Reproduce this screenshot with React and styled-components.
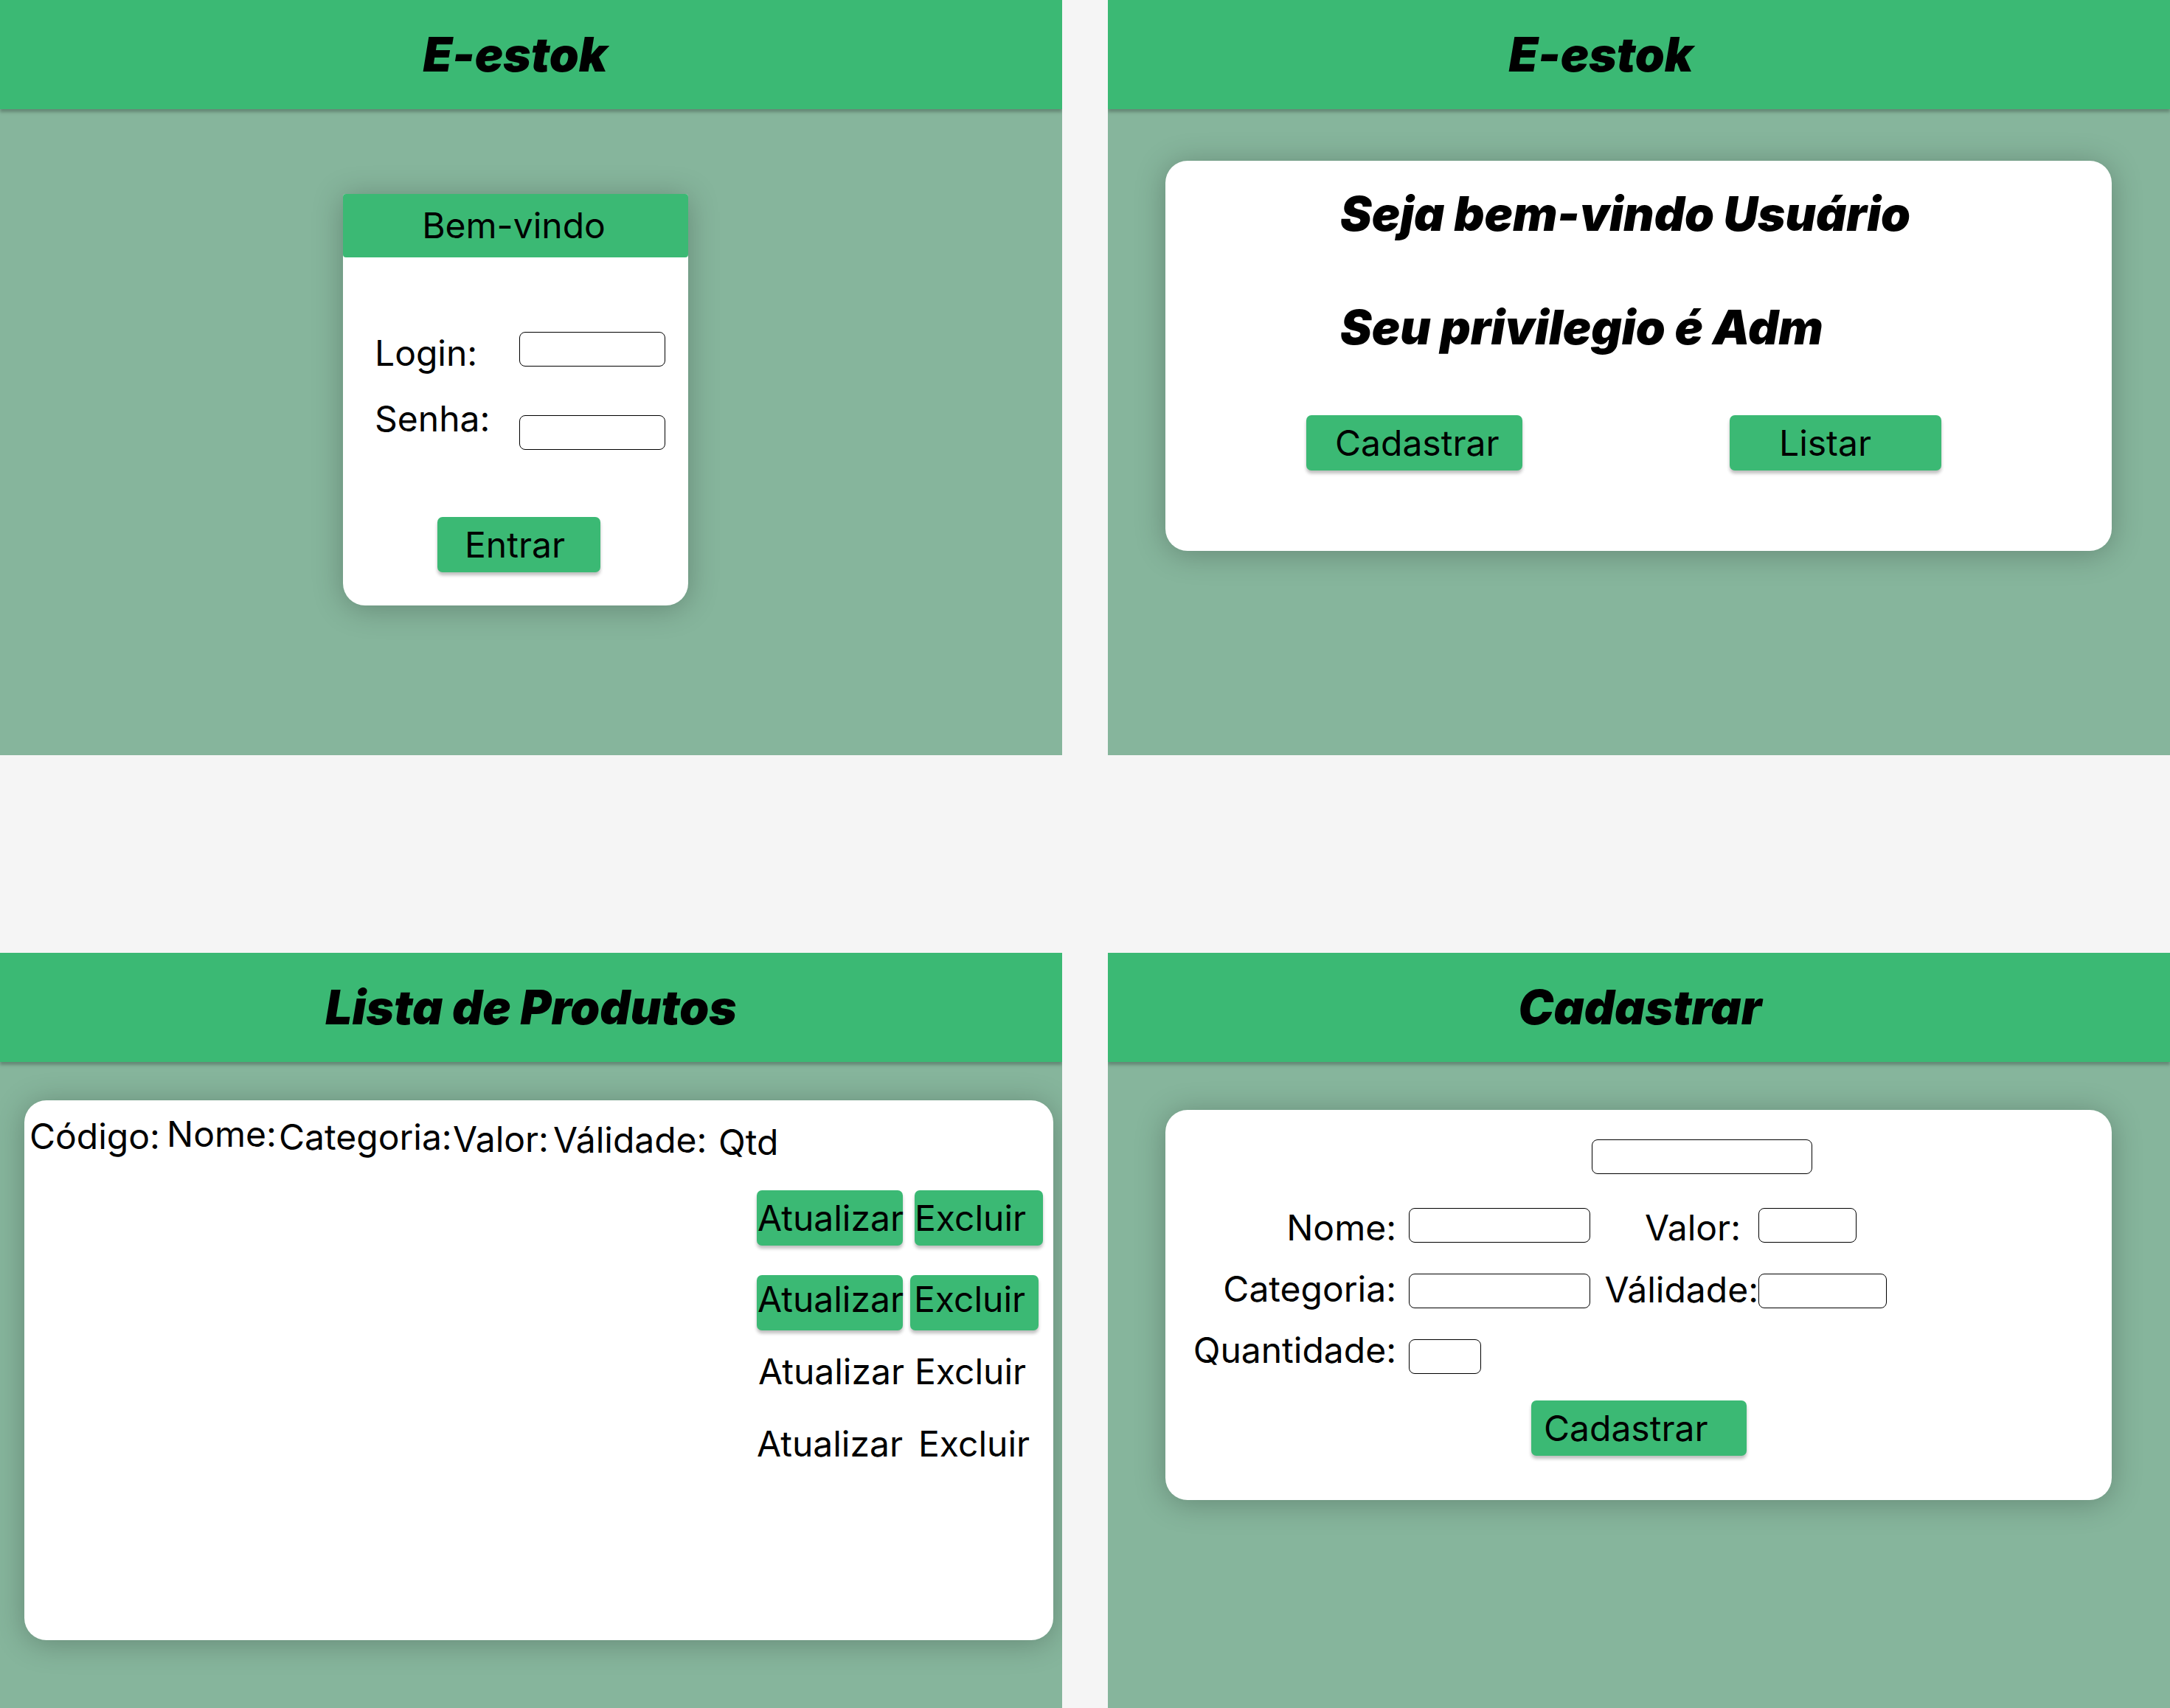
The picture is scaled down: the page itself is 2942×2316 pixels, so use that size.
import React from "react";
import styled, { createGlobalStyle } from "styled-components";

const GREEN = "#3BB974";
const PANEL = "#86B59C";
const PAGE = "#F5F5F5";

const Global = createGlobalStyle`
  html, body { margin: 0; padding: 0; background: ${PAGE}; }
  body { font-family: Inter, "Noto Sans", sans-serif; color: #000; }
  *, *::before, *::after { box-sizing: border-box; }
`;

const Board = styled.main`
  display: grid;
  grid-template-columns: 1440px 1440px;
  grid-template-rows: 1024px 1024px;
  column-gap: 62px;
  row-gap: 268px;
  width: 2942px;
  height: 2316px;
  background: ${PAGE};
`;

const Screen = styled.section`
  background: ${PANEL};
  display: flex;
  flex-direction: column;
  overflow: hidden;
`;

const TopBar = styled.header`
  position: relative;
  z-index: 1;
  flex: none;
  height: 148px;
  background: ${GREEN};
  box-shadow: 0 4px 4px rgba(0, 0, 0, 0.25);
  display: flex;
  align-items: center;
  justify-content: center;
  padding-right: ${(p) => p.$shift || 0}px;
  padding-left: ${(p) => p.$shiftL || 0}px;
`;

const Title = styled.h1`
  margin: 0;
  font-family: Inter, "Noto Sans", sans-serif;
  font-size: 64px;
  font-weight: 900;
  font-style: italic;
  line-height: 1;
  white-space: nowrap;
`;

const Input = styled.input`
  display: block;
  width: ${(p) => p.$w}px;
  height: 47px;
  margin: 0;
  margin-top: ${(p) => p.$mt || 0}px;
  padding: 0;
  border: 1px solid #000;
  border-radius: 8px;
  background: #fff;
  outline: none;
  justify-self: start;
`;

const GreenButton = styled.button`
  flex: none;
  width: ${(p) => p.$w}px;
  height: 75px;
  margin: 0;
  margin-left: ${(p) => p.$ml || 0}px;
  margin-top: ${(p) => p.$mt || 0}px;
  padding: 0 0 ${(p) => p.$pb || 0}px ${(p) => p.$pl || 0}px;
  text-align: left;
  background: ${GREEN};
  border: none;
  border-radius: 7px;
  box-shadow: 0 4px 4px rgba(0, 0, 0, 0.25);
  font-family: Inter, "Noto Sans", sans-serif;
  font-size: 48px;
  font-weight: 400;
  line-height: 1;
  color: #000;
  white-space: nowrap;
  align-self: flex-start;
`;

/* ---------- Login ---------- */
const LoginCard = styled.div`
  margin: 115px 0 0 465px;
  width: 468px;
  height: 558px;
  background: #fff;
  border-radius: 4px 4px 30px 30px;
  box-shadow: 0 4px 40px rgba(0, 0, 0, 0.25);
  display: flex;
  flex-direction: column;
`;

const CardHead = styled.div`
  height: 86px;
  background: ${GREEN};
  border-radius: 4px;
  display: flex;
  align-items: center;
  justify-content: center;
  font-size: 48px;
  line-height: 1;
  padding-right: 5px;
`;

const LoginBody = styled.div`
  display: flex;
  flex-direction: column;
  padding: 101px 31px 0 43px;
`;

const FieldRow = styled.div`
  display: flex;
  align-items: flex-start;
  margin-top: ${(p) => p.$mt || 0}px;
`;

const FieldLabel = styled.label`
  width: 196px;
  font-size: 48px;
  line-height: 48px;
  margin-top: ${(p) => p.$mt || 0}px;
  white-space: nowrap;
`;

/* ---------- Welcome ---------- */
const WelcomeCard = styled.div`
  margin: 70px 79px 0 78px;
  height: 529px;
  background: #fff;
  border-radius: 30px;
  box-shadow: 0 4px 40px rgba(0, 0, 0, 0.25);
  padding: 40px 0 0 191px;
  display: flex;
  flex-direction: column;
`;

const Heading = styled.h2`
  margin: ${(p) => p.$mt || 0}px 0 0 46px;
  font-size: 64px;
  font-weight: 900;
  font-style: italic;
  line-height: 1;
  white-space: nowrap;
`;

const ButtonRow = styled.div`
  display: flex;
  margin-top: 87px;
`;

/* ---------- List ---------- */
const ListCard = styled.div`
  margin: 52px 12px 0 33px;
  height: 732px;
  background: #fff;
  border-radius: 30px;
  box-shadow: 0 4px 40px rgba(0, 0, 0, 0.25);
  padding: 22px 0 0 7px;
  display: flex;
  flex-direction: column;
`;

const HeadRow = styled.div`
  display: flex;
  align-items: flex-start;
  height: 60px;
`;

const HeadCell = styled.span`
  flex: none;
  width: ${(p) => (p.$w ? `${p.$w}px` : "auto")};
  margin-top: ${(p) => p.$mt || 0}px;
  font-size: 48px;
  line-height: 1;
  white-space: nowrap;
`;

const ActionList = styled.div`
  display: flex;
  flex-direction: column;
  margin-left: 986px;
`;

const ActionRow = styled.div`
  display: flex;
  align-items: center;
  height: 75px;
  margin-top: ${(p) => p.$mt || 0}px;
`;

const PlainAction = styled.span`
  flex: none;
  width: ${(p) => p.$w}px;
  margin-left: ${(p) => p.$ml || 0}px;
  padding-left: ${(p) => p.$pl || 0}px;
  font-size: 48px;
  line-height: 1;
  white-space: nowrap;
`;

/* ---------- Form ---------- */
const FormCard = styled.div`
  margin: 65px 79px 0 78px;
  height: 529px;
  background: #fff;
  border-radius: 30px;
  box-shadow: 0 4px 40px rgba(0, 0, 0, 0.25);
  padding: 40px 0 0 0;
  display: flex;
  flex-direction: column;
`;

const CodeInput = styled(Input)`
  margin-left: 578px;
`;

const FormGrid = styled.div`
  display: grid;
  grid-template-columns: 330px 246px 228px auto;
  row-gap: 42px;
  align-items: center;
  margin-top: 46px;
`;

const FormLabel = styled.label`
  grid-column: ${(p) => p.$col};
  justify-self: end;
  padding-right: ${(p) => p.$pr || 0}px;
  font-size: 48px;
  line-height: 48px;
  white-space: nowrap;
  margin-top: ${(p) => (p.$dy < 0 ? p.$dy * 2 : 0)}px;
  margin-bottom: ${(p) => (p.$dy > 0 ? -p.$dy * 2 : 0)}px;
`;

export default function App() {
  return (
    <>
      <Global />
      <Board>
        {/* Login screen */}
        <Screen>
          <TopBar $shift={43}>
            <Title>E-estok</Title>
          </TopBar>
          <LoginCard>
            <CardHead>Bem-vindo</CardHead>
            <LoginBody>
              <FieldRow>
                <FieldLabel $mt={5}>Login:</FieldLabel>
                <Input $w={198} readOnly />
              </FieldRow>
              <FieldRow $mt={41}>
                <FieldLabel>Senha:</FieldLabel>
                <Input $w={198} $mt={19} type="password" readOnly />
              </FieldRow>
              <GreenButton $w={221} $pl={37} $ml={85} $mt={91}>
                Entrar
              </GreenButton>
            </LoginBody>
          </LoginCard>
        </Screen>

        {/* Welcome screen */}
        <Screen>
          <TopBar $shift={103}>
            <Title>E-estok</Title>
          </TopBar>
          <WelcomeCard>
            <Heading>Seja bem-vindo Usuário</Heading>
            <Heading $mt={90}>Seu privilegio é Adm</Heading>
            <ButtonRow>
              <GreenButton $w={293} $pl={39}>
                Cadastrar
              </GreenButton>
              <GreenButton $w={287} $pl={67} $ml={281}>
                Listar
              </GreenButton>
            </ButtonRow>
          </WelcomeCard>
        </Screen>

        {/* Product list */}
        <Screen>
          <TopBar>
            <Title>Lista de Produtos</Title>
          </TopBar>
          <ListCard>
            <HeadRow>
              <HeadCell $w={186} $mt={3}>Código:</HeadCell>
              <HeadCell $w={152}>Nome:</HeadCell>
              <HeadCell $w={236} $mt={4}>Categoria:</HeadCell>
              <HeadCell $w={136} $mt={7}>Valor:</HeadCell>
              <HeadCell $w={224} $mt={8}>Válidade:</HeadCell>
              <HeadCell $mt={11}>Qtd</HeadCell>
            </HeadRow>
            <ActionList>
              <ActionRow $mt={40}>
                <GreenButton $w={198} $pl={1}>Atualizar</GreenButton>
                <GreenButton $w={174} $pl={0} $ml={16}>Excluir</GreenButton>
              </ActionRow>
              <ActionRow $mt={40}>
                <GreenButton $w={198} $pl={1} $pb={10}>Atualizar</GreenButton>
                <GreenButton $w={174} $pl={5} $ml={10} $pb={10}>Excluir</GreenButton>
              </ActionRow>
              <ActionRow $mt={18}>
                <PlainAction $w={198} $pl={2}>Atualizar</PlainAction>
                <PlainAction $w={174} $ml={16}>Excluir</PlainAction>
              </ActionRow>
              <ActionRow $mt={23}>
                <PlainAction $w={198} $pl={0}>Atualizar</PlainAction>
                <PlainAction $w={174} $ml={21}>Excluir</PlainAction>
              </ActionRow>
            </ActionList>
          </ListCard>
        </Screen>

        {/* Register form */}
        <Screen>
          <TopBar $shiftL={3}>
            <Title>Cadastrar</Title>
          </TopBar>
          <FormCard>
            <CodeInput $w={299} readOnly />
            <FormGrid>
              <FormLabel $col={1} $pr={17} $dy={3}>Nome:</FormLabel>
              <Input $w={246} readOnly />
              <FormLabel $col={3} $pr={24} $dy={3}>Valor:</FormLabel>
              <Input $w={133} readOnly />

              <FormLabel $col={1} $pr={17} $dy={-3}>Categoria:</FormLabel>
              <Input $w={246} readOnly />
              <FormLabel $col={3} $pr={0} $dy={-2}>Válidade:</FormLabel>
              <Input $w={174} readOnly />

              <FormLabel $col={1} $pr={17} $dy={-9}>Quantidade:</FormLabel>
              <Input $w={98} readOnly />
            </FormGrid>
            <GreenButton $w={292} $pl={17} $ml={496} $mt={36}>
              Cadastrar
            </GreenButton>
          </FormCard>
        </Screen>
      </Board>
    </>
  );
}
